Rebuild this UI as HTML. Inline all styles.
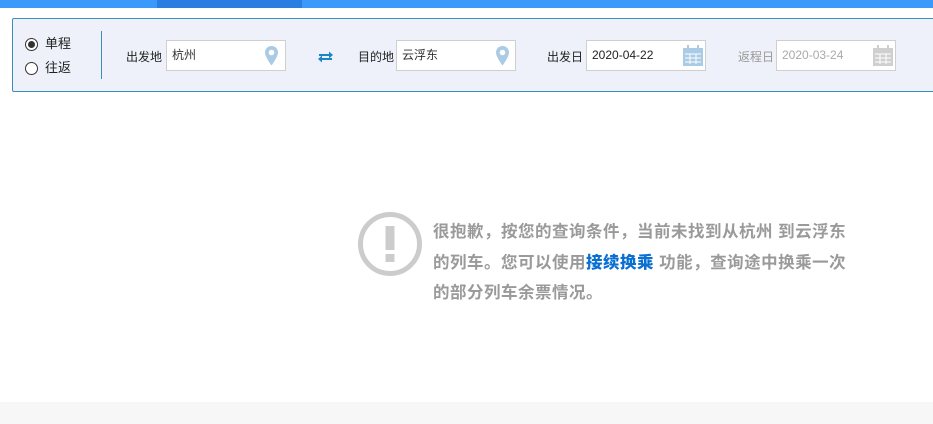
<!DOCTYPE html>
<html><head><meta charset="utf-8"><style>
*{margin:0;padding:0;box-sizing:border-box}
body{width:933px;height:424px;overflow:hidden;background:#fff;font-family:"Liberation Sans","Noto Sans CJK SC",sans-serif;position:relative}
.a{position:absolute}
.top{left:0;top:0;width:933px;height:8px;background:#3b99fc}
.top2{left:157px;top:0;width:145px;height:8px;background:#2a7de1}
.panel{left:12px;top:18px;width:930px;height:74px;background:#eef1f9;border:1px solid #3d8db5;border-radius:2px}
.radio{width:13px;height:13px;border:1px solid #333;border-radius:50%;background:#fff}
.radio.on::after{content:"";position:absolute;left:2px;top:2px;width:7px;height:7px;border-radius:50%;background:#333}
.lbl{font-size:12px;color:#222;line-height:16px}
.inp{height:31px;width:120px;background:#fff;border:1px solid #cfcfcf;font-size:12px;line-height:29px;padding-left:5px;color:#333}
.foot{left:0;top:402px;width:933px;height:22px;background:#f7f7f7}
.msg{left:433px;top:217px;white-space:nowrap;font-size:16.5px;letter-spacing:0.5px;font-weight:bold;color:#9a9a9a;line-height:30.5px}
.msg b{color:#0a6fd0}
</style></head><body>
<div class="a top"></div><div class="a top2"></div>
<div class="a panel"></div>
<div class="a radio on" style="left:25px;top:38px"></div>
<div class="a lbl" style="left:45px;top:36px;font-size:13px">单程</div>
<div class="a radio" style="left:25px;top:62px"></div>
<div class="a lbl" style="left:45px;top:60px;font-size:13px">往返</div>
<div class="a" style="left:101px;top:31px;width:1px;height:48px;background:#3d8db5"></div>

<div class="a lbl" style="left:126px;top:49px">出发地</div>
<div class="a inp" style="left:166px;top:40px">杭州</div>
<svg class="a" style="left:264px;top:45px" width="15" height="22" viewBox="0 0 15 22"><path d="M7.5 1C3.6 1 1 4 1 7.5c0 4.5 6.5 13 6.5 13S14 12 14 7.5C14 4 11.4 1 7.5 1z" fill="#a9cbe6"/><circle cx="7.5" cy="7.5" r="2.8" fill="#fff"/></svg>

<svg class="a" style="left:317px;top:50px" width="17" height="14" viewBox="0 0 17 14"><path d="M2 6V4h10V1.5L16 5l-4 3.5V6z" fill="#1a86c4"/><path d="M15 8v2H5v2.5L1 9l4-3.5V8z" fill="#1a86c4"/></svg>

<div class="a lbl" style="left:358px;top:49px">目的地</div>
<div class="a inp" style="left:396px;top:40px">云浮东</div>
<svg class="a" style="left:495px;top:45px" width="15" height="22" viewBox="0 0 15 22"><path d="M7.5 1C3.6 1 1 4 1 7.5c0 4.5 6.5 13 6.5 13S14 12 14 7.5C14 4 11.4 1 7.5 1z" fill="#a9cbe6"/><circle cx="7.5" cy="7.5" r="2.8" fill="#fff"/></svg>

<div class="a lbl" style="left:547px;top:49px">出发日</div>
<div class="a inp" style="left:586px;top:40px;color:#222">2020-04-22</div>
<svg class="a" style="left:683px;top:45px" width="20" height="21" viewBox="0 0 20 21"><rect x="0" y="3" width="20" height="18" fill="#a9cbe6"/><rect x="4" y="0" width="2" height="5" fill="#a9cbe6"/><rect x="14" y="0" width="2" height="5" fill="#a9cbe6"/><path d="M2 9h16M2 13h16M2 17h16M7 9v10M13 9v10" stroke="#fff" stroke-width="1"/></svg>

<div class="a lbl" style="left:738px;top:49px;color:#999">返程日</div>
<div class="a inp" style="left:776px;top:40px;color:#aaa">2020-03-24</div>
<svg class="a" style="left:873px;top:45px" width="20" height="21" viewBox="0 0 20 21"><rect x="0" y="3" width="20" height="18" fill="#cfcfcf"/><rect x="4" y="0" width="2" height="5" fill="#cfcfcf"/><rect x="14" y="0" width="2" height="5" fill="#cfcfcf"/><path d="M2 9h16M2 13h16M2 17h16M7 9v10M13 9v10" stroke="#fff" stroke-width="1"/></svg>

<svg class="a" style="left:357px;top:211px" width="66" height="66" viewBox="0 0 66 66"><circle cx="33" cy="33" r="29.5" fill="none" stroke="#cccccc" stroke-width="5"/><rect x="28.5" y="15" width="9" height="24" fill="#cccccc"/><rect x="28.5" y="43" width="9" height="8" fill="#cccccc"/></svg>
<div class="a msg">很抱歉，按您的查询条件，当前未找到从杭州 到云浮东<br>的列车。您可以使用<b>接续换乘</b> 功能，查询途中换乘一次<br>的部分列车余票情况。</div>
<div class="a foot"></div>
</body></html>
